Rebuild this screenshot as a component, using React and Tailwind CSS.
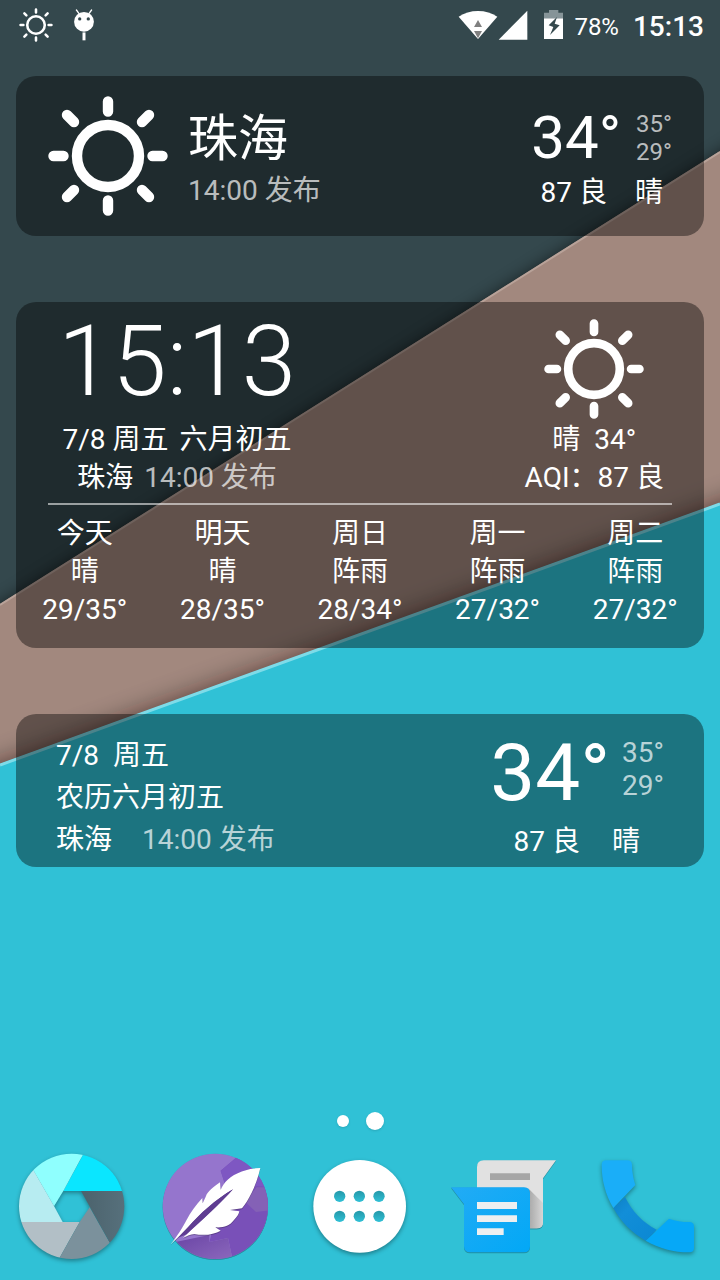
import React from "react";

const FORECAST = [
  { day: "今天", sky: "晴", range: "29/35°" },
  { day: "明天", sky: "晴", range: "28/35°" },
  { day: "周日", sky: "阵雨", range: "28/34°" },
  { day: "周一", sky: "阵雨", range: "27/32°" },
  { day: "周二", sky: "阵雨", range: "27/32°" },
];

const CARD = "rounded-[20px] bg-black/40";

function Sun({ className, ray = 10.4 }) {
  return (
    <svg viewBox="0 0 120 120" className={className} fill="none" stroke="currentColor" aria-hidden="true">
      <circle cx="60" cy="60" r="31" strokeWidth={ray} />
      <g strokeWidth={ray} strokeLinecap="round">
        <path d="M60 5.5V15.5M60 104.5V114.5M5.5 60H15.5M104.5 60H114.5" />
        <path d="M19 19L26 26M94 94L101 101M101 19L94 26M26 94L19 101" />
      </g>
    </svg>
  );
}

function Wallpaper() {
  return (
    <svg
      viewBox="0 0 720 1280"
      preserveAspectRatio="none"
      className="absolute inset-0 h-full w-full"
      aria-hidden="true"
    >
      <defs>
        <filter id="edge-a" x="-10%" y="-10%" width="120%" height="120%">
          <feGaussianBlur stdDeviation="9" />
        </filter>
        <filter id="edge-b" x="-10%" y="-10%" width="120%" height="120%">
          <feGaussianBlur stdDeviation="14" />
        </filter>
      </defs>
      <rect width="720" height="1280" fill="#34484d" />
      <path d="M-40 633L760 130V1280H-40Z" fill="#000" opacity=".75" filter="url(#edge-a)" />
      <path d="M0 604L720 151V1280H0Z" fill="#a2887e" />
      <path d="M0 605L720 152" stroke="#b8a299" strokeWidth="2" />
      <path d="M-40 782L760 492V1280H-40Z" fill="#1c0f08" opacity=".7" filter="url(#edge-b)" />
      <path d="M0 764L720 503V1280H0Z" fill="#30c1d6" />
      <path d="M0 765L720 504" stroke="#7edbe8" strokeWidth="3" />
    </svg>
  );
}

function StatusBar() {
  return (
    <header className="flex h-[50px] items-center justify-between pl-[19px] pr-4">
      <div className="flex items-center gap-5">
        <Sun className="h-[34px] w-[34px]" ray={9} />
        <svg viewBox="219 28 66 97" className="h-8 w-[22px]" aria-hidden="true">
          <path d="M229 31L237 42M275 31L267 42" stroke="#fff" strokeWidth="4" strokeLinecap="round" />
          <circle cx="252" cy="67" r="30" fill="#fff" />
          <circle cx="239" cy="58" r="5" fill="#34484d" />
          <circle cx="265" cy="58" r="5" fill="#34484d" />
          <path d="M252 99V123" stroke="#fff" strokeWidth="9" />
        </svg>
      </div>
      <div className="flex items-center">
        <svg viewBox="48 30 120 90" className="h-[30px] w-10" aria-hidden="true">
          <path d="M50 50Q75 33 108 33Q141 33 166 50L108 117Z" fill="#fff" />
          <path d="M108 60L120 81H96ZM96 93H120L108 115Z" fill="#808080" />
        </svg>
        <svg viewBox="174 30 90 90" className="mr-4 h-[30px] w-[30px]" aria-hidden="true">
          <path d="M262 32V119H176Z" fill="#fff" />
        </svg>
        <svg viewBox="312 30 57 90" className="mr-[11px] h-[30px] w-[19px]" aria-hidden="true">
          <path d="M327 30H355V38H369V55H312V38H327Z" fill="#869498" />
          <path d="M312 55H369V117H312Z" fill="#fff" />
          <path d="M351 51L326 76L340 81L330 105L359 76L344 71Z" fill="#34484d" />
        </svg>
        <span className="mr-[14px] pt-[3px] text-[24px] leading-8">78%</span>
        <time className="pt-1 text-[28px] font-medium leading-8">15:13</time>
      </div>
    </header>
  );
}

function CurrentCard() {
  return (
    <section className={`${CARD} flex h-40 items-center justify-between px-8`} aria-label="珠海">
      <div className="flex items-center gap-5">
        <Sun className="h-[120px] w-[120px]" />
        <div className="pt-[10px]">
          <h2 className="text-[50px] leading-[60px]">珠海</h2>
          <p className="leading-[44px] text-white/70">14:00 发布</p>
        </div>
      </div>
      <div className="flex flex-col items-end pt-[5px]">
        <div className="flex items-center gap-[15px]">
          <span className="text-[60px] leading-[68px]">34°</span>
          <div className="text-2xl leading-7 text-white/70">
            <p>35°</p>
            <p>29°</p>
          </div>
        </div>
        <div className="flex gap-7 pr-[9px] leading-[42px]">
          <span>87 良</span>
          <span>晴</span>
        </div>
      </div>
    </section>
  );
}

function ForecastCard() {
  return (
    <section className={`${CARD} pb-[19px]`} aria-label="天气预报">
      <div className="flex justify-between pl-[42px] pr-10 pt-px text-center leading-[38px]">
        <div>
          <time className="block text-[98px] font-light leading-[118px]">15:13</time>
          <p className="flex justify-center gap-[11px]">
            <span>7/8 周五</span>
            <span>六月初五</span>
          </p>
          <p className="flex justify-center gap-[11px]">
            <span>珠海</span>
            <span className="text-white/70">14:00 发布</span>
          </p>
        </div>
        <div className="flex flex-col items-center pt-4">
          <Sun className="mb-[2px] h-[100px] w-[100px]" />
          <p className="flex gap-[14px]">
            <span>晴</span>
            <span>34°</span>
          </p>
          <p>AQI：87 良</p>
        </div>
      </div>
      <hr className="mx-8 mt-[6px] border-0 border-t-2 border-white/55" />
      <ul className="grid grid-cols-5 pt-[10px] text-center leading-[38px]">
        {FORECAST.map((f) => (
          <li key={f.day}>
            <p>{f.day}</p>
            <p>{f.sky}</p>
            <p>{f.range}</p>
          </li>
        ))}
      </ul>
    </section>
  );
}

function CalendarCard() {
  return (
    <section className={`${CARD} flex justify-between px-10 pb-1 pt-[21px]`} aria-label="农历与天气">
      <div className="leading-[42px]">
        <p className="flex gap-[14px]">
          <span>7/8</span>
          <span>周五</span>
        </p>
        <p>农历六月初五</p>
        <p className="flex gap-[30px]">
          <span>珠海</span>
          <span className="text-white/70">14:00 发布</span>
        </p>
      </div>
      <div className="flex flex-col items-end">
        <div className="flex gap-3">
          <span className="text-[80px] leading-[76px]">34°</span>
          <div className="pt-px leading-[33px] text-white/70">
            <p>35°</p>
            <p>29°</p>
          </div>
        </div>
        <div className="flex gap-8 pr-6 pt-[10px] leading-[42px]">
          <span>87 良</span>
          <span>晴</span>
        </div>
      </div>
    </section>
  );
}

const ICON = "h-[120px] w-[120px] overflow-visible";
const SHADOW = "drop-shadow-[0_2px_2px_rgba(0,0,0,0.35)]";

function CameraIcon() {
  return (
    <svg viewBox="36 141 360 360" className={`${ICON} ${SHADOW}`} aria-hidden="true">
      <defs>
        <clipPath id="lens">
          <circle cx="215" cy="319" r="158" />
        </clipPath>
        <linearGradient id="fold" x1="0" y1="1" x2="1" y2="0">
          <stop offset="0" stopColor="#5fd0d6" />
          <stop offset=".5" stopColor="#8ffffe" />
        </linearGradient>
        <linearGradient id="slate" x1="0" y1="0" x2="1" y2="0">
          <stop offset="0" stopColor="#4b626c" />
          <stop offset="1" stopColor="#59737f" />
        </linearGradient>
      </defs>
      <g clipPath="url(#lens)">
        <path d="M190 273L249 165L262 140H400V273Z" fill="#0ae6ff" />
        <path d="M162 318L100 210L60 140H262L190 273Z" fill="#8ffffe" />
        <path d="M100 210L174 298L162 318Z" fill="url(#fold)" opacity=".6" />
        <path d="M188 366L162 318L60 140H36V366Z" fill="#b7ecf1" />
        <path d="M239 366H36V500H164Z" fill="#b2bfc6" />
        <path d="M269 322L239 366L164 500H370Z" fill="#7b919c" />
        <path d="M243 273H400V500H370Z" fill="url(#slate)" />
      </g>
    </svg>
  );
}

function FeatherIcon() {
  return (
    <svg viewBox="468 141 360 360" className={ICON} aria-hidden="true">
      <defs>
        <clipPath id="disc">
          <circle cx="646" cy="319" r="158" />
        </clipPath>
        <linearGradient id="violet" x1="0" y1="0" x2="1" y2="1">
          <stop offset="0" stopColor="#6a45a5" />
          <stop offset="1" stopColor="#8c68bd" />
        </linearGradient>
      </defs>
      <g className={SHADOW}>
        <circle cx="646" cy="319" r="158" fill="#9575cd" />
        <g clipPath="url(#disc)">
          <path d="M710 172L662 212L674 250L628 426L684 414L698 480L820 420V160Z" fill="#7950b8" />
          <path d="M710 172L662 212L674 250L820 262V160Z" fill="#7e57c2" />
          <path d="M770 262H820V330L768 336L735 305Z" fill="#8461b6" />
          <path d="M530 425L628 405V426L684 414L698 480H560Z" fill="url(#violet)" />
        </g>
      </g>
      <path
        className={SHADOW}
        d="M781 204C745 205 706 218 683 239C673 248 667 257 662 269L660 247C640 260 622 276 618 288L608 310L607 294C588 315 571 337 560 359C549 381 530 410 513 432C532 415 547 400 564 382C599 342 646 299 699 268C666 306 602 364 549 413C562 409 571 402 583 402C613 408 643 403 662 392L646 382C668 384 689 378 702 360C712 350 716 343 718 334L690 330L726 325C750 296 770 251 781 204Z"
        fill="#fff"
      />
      <path d="M699 268C646 299 599 342 564 382L534 413L560 403C602 364 666 306 699 268Z" fill="#5f3d92" />
    </svg>
  );
}

function AppsIcon() {
  return (
    <svg viewBox="30 141 360 360" className={`${ICON} ${SHADOW}`} aria-hidden="true">
      <defs>
        <linearGradient id="hole" x1="0" y1="0" x2="0" y2="1">
          <stop offset="0" stopColor="#2597a8" />
          <stop offset="1" stopColor="#30c1d6" />
        </linearGradient>
      </defs>
      <circle cx="209" cy="319" r="139" fill="#fff" />
      {[289, 349].map((y) =>
        [149, 208, 267].map((x) => <circle key={`${x}-${y}`} cx={x} cy={y} r="17" fill="url(#hole)" />)
      )}
    </svg>
  );
}

function MessagesIcon() {
  return (
    <svg viewBox="12 141 360 360" className={ICON} aria-hidden="true">
      <defs>
        <linearGradient id="bubble" x1="0" y1="0" x2="1" y2="1">
          <stop offset="0" stopColor="#22abf5" />
          <stop offset="1" stopColor="#02a8f6" />
        </linearGradient>
        <linearGradient id="cast" x1="0" y1="0" x2="1" y2="0">
          <stop offset="0" stopColor="#a8a8a8" />
          <stop offset="1" stopColor="#d6d6d6" />
        </linearGradient>
      </defs>
      <g className={SHADOW}>
        <path d="M131 181H348L309 235V366Q309 385 290 385H111V201Q111 181 131 181Z" fill="#e1e1e1" />
        <path d="M266 266L309 309V366Q309 385 290 385H266Z" fill="url(#cast)" />
        <path d="M150 220H270V240H150Z" fill="#a6a6a6" />
      </g>
      <path className={SHADOW} d="M33 262H252Q270 262 270 280V439Q270 457 252 457H90Q72 457 72 439V313Z" fill="url(#bubble)" />
      <path d="M111 306H231V327H111ZM111 346H231V366H111ZM111 385H191V405H111Z" fill="#eeeff0" />
    </svg>
  );
}

function PhoneIcon() {
  return (
    <svg viewBox="444 141 360 360" className={`${ICON} ${SHADOW}`} aria-hidden="true">
      <defs>
        <linearGradient id="handle" x1="0" y1="0" x2="1" y2="1">
          <stop offset="0" stopColor="#0d7fc4" />
          <stop offset=".3" stopColor="#128ed8" />
          <stop offset="1" stopColor="#0b88d3" />
        </linearGradient>
      </defs>
      <path d="M520 324L555 291C576 333 606 366 650 389L617 422C575 398 544 367 520 324Z" fill="url(#handle)" />
      <path d="M498 181H562Q576 181 576 195C576 216 580 236 586 255L520 324C496 284 485 240 485 195Q485 181 498 181Z" fill="#1aaef8" />
      <path d="M687 356C706 363 727 366 748 366Q762 366 762 380V444Q762 457 748 457C701 457 657 445 617 422Z" fill="#06a8f7" />
    </svg>
  );
}

const DOCK = [
  { name: "相机", Icon: CameraIcon },
  { name: "羽毛", Icon: FeatherIcon },
  { name: "所有应用", Icon: AppsIcon },
  { name: "信息", Icon: MessagesIcon },
  { name: "电话", Icon: PhoneIcon },
];

export default function App() {
  return (
    <div className="relative isolate min-h-screen overflow-hidden bg-[#30c1d6] font-['Roboto','Noto_Sans_CJK_SC',sans-serif] text-[28px] text-white">
      <Wallpaper />
      <div className="relative flex min-h-screen flex-col">
        <StatusBar />
        <main className="flex flex-col gap-[66px] px-4 pt-[26px]">
          <CurrentCard />
          <ForecastCard />
          <CalendarCard />
        </main>
        <div className="mt-auto flex items-center justify-center gap-[17px] pb-[17px]">
          <button type="button" aria-label="第 1 页" className="h-3 w-3 rounded-full bg-white shadow" />
          <button type="button" aria-label="第 2 页" aria-current="true" className="h-[18px] w-[18px] rounded-full bg-white shadow" />
        </div>
        <nav className="grid grid-cols-5 pb-[13px]" aria-label="应用栏">
          {DOCK.map(({ name, Icon }) => (
            <button key={name} type="button" aria-label={name} className="flex justify-center">
              <Icon />
            </button>
          ))}
        </nav>
      </div>
    </div>
  );
}
